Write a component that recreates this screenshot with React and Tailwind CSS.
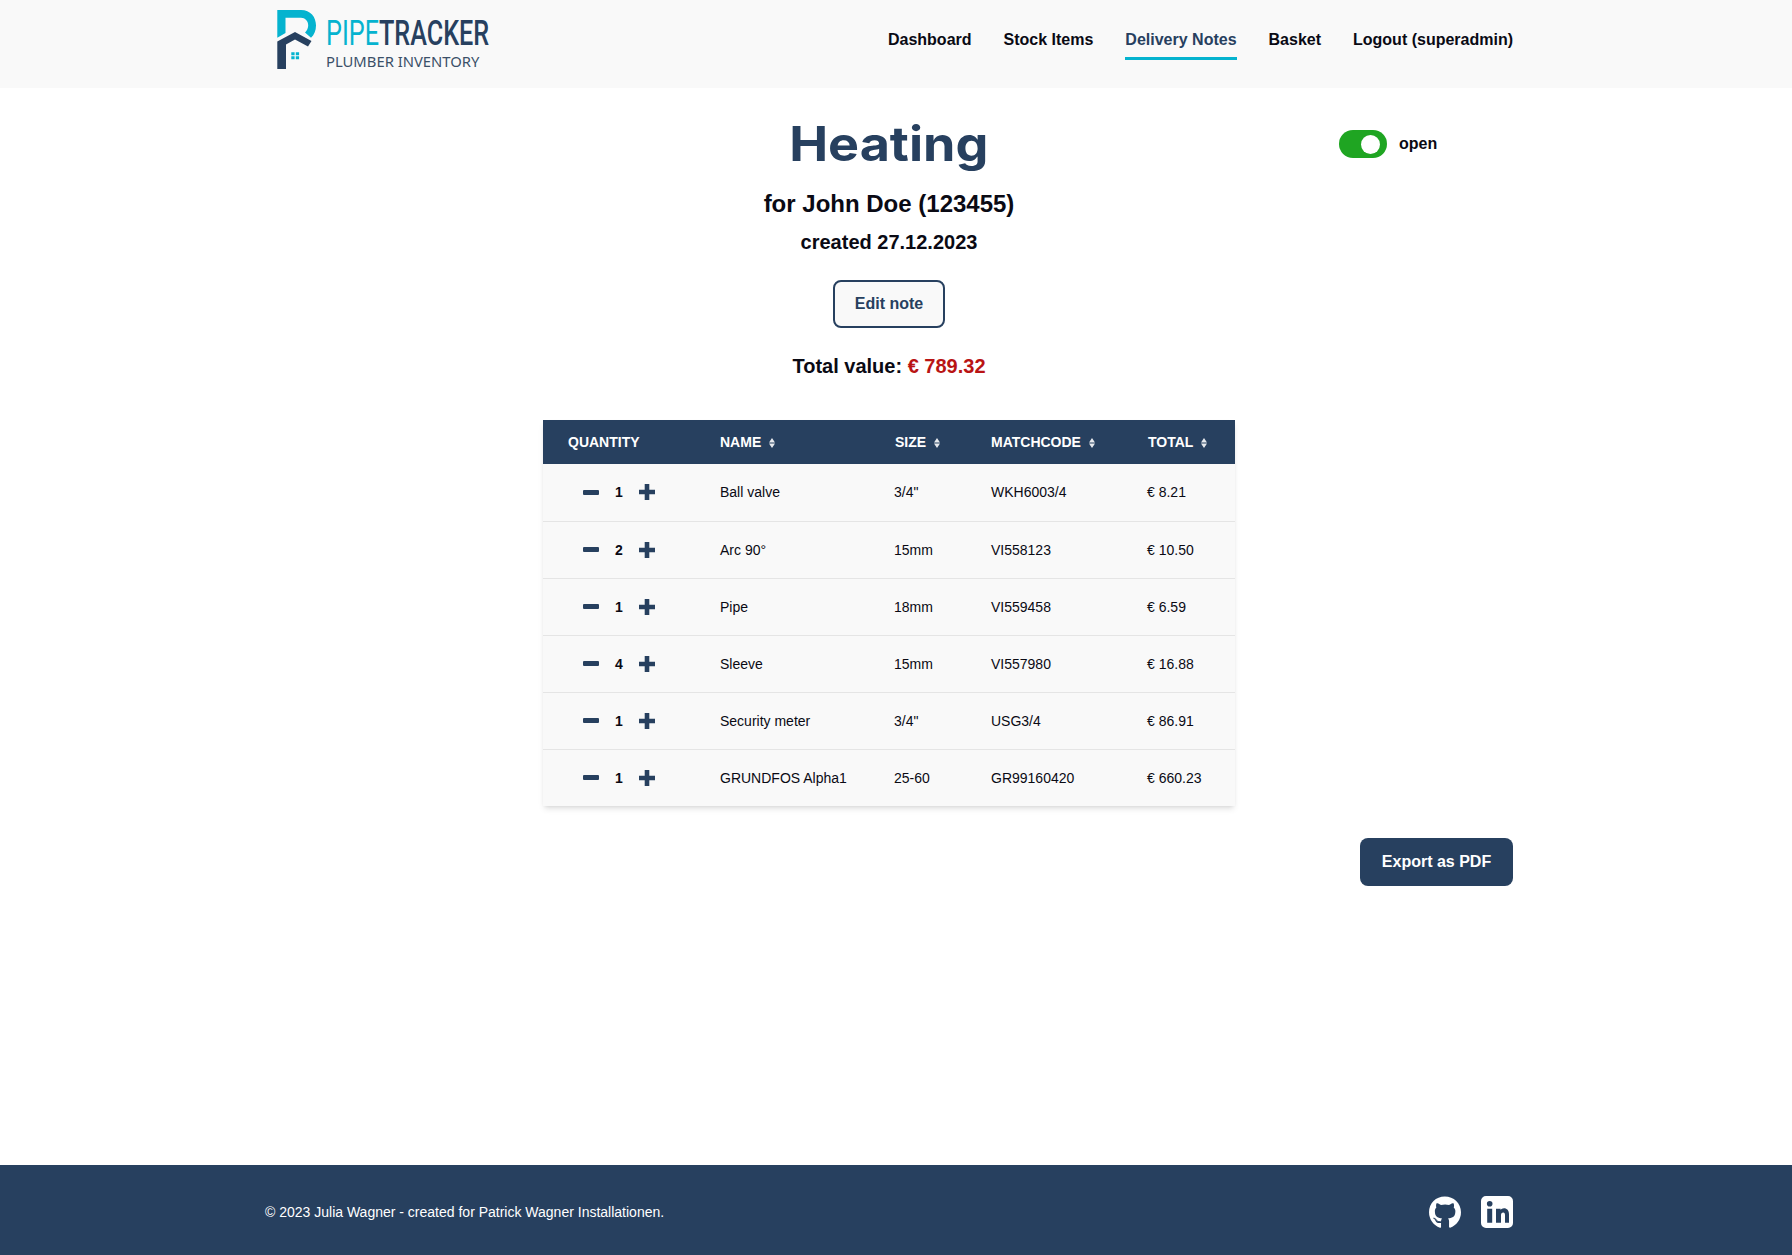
import { FaGithub } from 'react-icons/fa';

const rows = [
  { qty: 1, name: 'Ball valve', size: '3/4"', code: 'WKH6003/4', total: '€ 8.21' },
  { qty: 2, name: 'Arc 90°', size: '15mm', code: 'VI558123', total: '€ 10.50' },
  { qty: 1, name: 'Pipe', size: '18mm', code: 'VI559458', total: '€ 6.59' },
  { qty: 4, name: 'Sleeve', size: '15mm', code: 'VI557980', total: '€ 16.88' },
  { qty: 1, name: 'Security meter', size: '3/4"', code: 'USG3/4', total: '€ 86.91' },
  { qty: 1, name: 'GRUNDFOS Alpha1', size: '25-60', code: 'GR99160420', total: '€ 660.23' },
];

const navItems = [
  { label: 'Dashboard' },
  { label: 'Stock Items' },
  { label: 'Delivery Notes', active: true },
  { label: 'Basket' },
  { label: 'Logout (superadmin)' },
];

function Logo() {
  return (
    <div className="flex items-start">
      <svg width="42" height="62" viewBox="16 9 42 62" className="mt-[9px] shrink-0">
        <path d="M17.3 10H41C50.5 10 56 17 56 25.5C56 30.5 54 35 51 37.8L45 32.5C47 30.5 48.2 28 48.2 25.5C48.2 21 45 17.8 41 17.8H25.5V33L17.3 37.8Z" fill="#05b3cf" />
        <path d="M17.3 69V41.5L35 32L51.5 41L48 46.5L35 39.5L26 44.5V69Z" fill="#27405f" />
        <path d="M31.3 52.3h3.3v3h-3.3zM35.8 52.3h3.3v3h-3.3zM31.3 56.3h3.3v3h-3.3zM35.8 56.3h3.3v3h-3.3z" fill="#05b3cf" />
      </svg>
      <div className="ml-[8px] flex flex-col">
        <p className="mt-[15px] h-[38px] origin-left scale-x-[0.72] whitespace-nowrap font-['Roboto',sans-serif] text-[35px] leading-[38px]">
          <span className="text-[#05b3cf]">PIPE</span>
          <span className="font-medium text-[#27405f]">TRACKER</span>
        </p>
        <p className="whitespace-nowrap font-['Noto_Sans',sans-serif] text-[14.8px] leading-[16px] text-[#3b5068]">PLUMBER INVENTORY</p>
      </div>
    </div>
  );
}

function SortIcon() {
  return (
    <svg width="6" height="10" viewBox="0 0 6 10" className="ml-[8px] inline-block align-[-1px]">
      <path d="M3 0L6 4.4H0ZM3 10L0 5.6H6Z" fill="#e6e9ed" />
    </svg>
  );
}

function Minus() {
  return <span className="block h-[5px] w-[16px] rounded-[1px] bg-[#27405f]" />;
}

function Plus() {
  return (
    <svg width="16" height="16" viewBox="0 0 16 16" className="block">
      <path d="M5.7 0h4.6v5.7H16v4.6h-5.7V16H5.7v-5.7H0V5.7h5.7z" fill="#27405f" />
    </svg>
  );
}

function LinkedinIcon() {
  return (
    <svg width="32" height="32" viewBox="0 0 32 32" className="block">
      <path
        fillRule="evenodd"
        d="M5 0H27A5 5 0 0 1 32 5V27A5 5 0 0 1 27 32H5A5 5 0 0 1 0 27V5A5 5 0 0 1 5 0ZM6.2 12.7V26.7H11.2V12.7ZM8.7 5A2.8 2.8 0 1 0 8.7 10.6A2.8 2.8 0 1 0 8.7 5ZM15 12.7V26.7H20V19.2C20 17.4 20.8 16.4 22.2 16.4C23.5 16.4 24 17.4 24 19.2V26.7H28V18.4C28 14.5 26 12.3 23 12.3C21.5 12.3 20.3 13 19.6 14.1V12.7Z"
        fill="#fff"
      />
    </svg>
  );
}

export default function App() {
  return (
    <div className="flex min-h-[1255px] flex-col bg-white font-['Liberation_Sans',Arial,sans-serif] text-[#0a0a14]">
      {/* Header */}
      <header className="h-[88px] bg-[#f9f9f9]">
        <div className="ml-[265px] flex w-[1248px] items-start justify-between pl-[11px]">
          <Logo />
          <nav className="flex gap-[32px] pt-[29px] text-base font-bold">
            {navItems.map((item) => (
              <a
                key={item.label}
                className={`h-[31px] whitespace-nowrap leading-[22px] ${
                  item.active ? 'border-b-[3px] border-[#05b3cf] text-[#27405f]' : ''
                }`}
              >
                {item.label}
              </a>
            ))}
          </nav>
        </div>
      </header>

      {/* Main */}
      <main className="ml-[265px] w-[1248px] flex-1">
        <div className="grid grid-cols-[278px_692px_278px]">
          <div />
          <div className="flex flex-col items-center">
            <h1 className="mt-[28px] scale-x-[1.085] font-['Inter',sans-serif] text-[48px] font-bold leading-[56px] text-[#27405f]">Heating</h1>
            <h2 className="mt-[18px] text-2xl font-bold leading-[28px]">for John Doe (123455)</h2>
            <h3 className="mt-[12px] text-xl font-bold leading-[24px]">created 27.12.2023</h3>
            <button className="mt-[26px] h-[48px] w-[112px] rounded-lg border-2 border-[#27405f] bg-[#f9f9f9] text-base font-bold text-[#27405f]">
              Edit note
            </button>
            <p className="mt-[26px] text-xl font-bold leading-[24px]">
              Total value: <span className="text-[#b91414]">€ 789.32</span>
            </p>
            <table className="mt-[42px] w-[692px] table-fixed border-collapse bg-[#f9f9f9] text-sm shadow-md">
              <colgroup>
                <col className="w-[177px]" />
                <col className="w-[174px]" />
                <col className="w-[97px]" />
                <col className="w-[156px]" />
                <col className="w-[88px]" />
              </colgroup>
              <thead>
                <tr className="h-[44px] bg-[#27405f] text-left text-white">
                  <th className="pl-[25px] font-bold">QUANTITY</th>
                  <th className="font-bold">NAME<SortIcon /></th>
                  <th className="pl-[1px] font-bold">SIZE<SortIcon /></th>
                  <th className="font-bold">MATCHCODE<SortIcon /></th>
                  <th className="pl-[1px] font-bold">TOTAL<SortIcon /></th>
                </tr>
              </thead>
              <tbody>
                {rows.map((row, i) => (
                  <tr key={i} className="h-[57px] border-t border-[#e5e5e5] first:border-t-0">
                    <td>
                      <div className="flex items-center pl-[40px]">
                        <Minus />
                        <span className="w-[40px] text-center font-bold">{row.qty}</span>
                        <Plus />
                      </div>
                    </td>
                    <td>{row.name}</td>
                    <td>{row.size}</td>
                    <td>{row.code}</td>
                    <td>{row.total}</td>
                  </tr>
                ))}
              </tbody>
            </table>
          </div>
          <div className="pl-[104px] pt-[42px]">
            <div className="flex items-center">
              <span className="flex h-[28px] w-[48px] items-center justify-end rounded-full bg-[#1fa522] pr-[7px]">
                <span className="h-[19px] w-[19px] rounded-full bg-white" />
              </span>
              <span className="ml-[12px] text-base font-bold">open</span>
            </div>
          </div>
        </div>
        <div className="mt-[32px] flex justify-end">
          <button className="h-[48px] w-[153px] rounded-lg bg-[#27405f] text-base font-bold text-white">Export as PDF</button>
        </div>
      </main>

      {/* Footer */}
      <footer className="h-[90px] bg-[#27405f] pt-[4px] text-white">
        <div className="ml-[265px] flex h-full w-[1248px] items-center justify-between">
          <p className="text-sm">© 2023 Julia Wagner - created for Patrick Wagner Installationen.</p>
          <div className="flex items-center gap-[20px]">
            <FaGithub className="h-[33px] w-[32px]" />
            <LinkedinIcon />
          </div>
        </div>
      </footer>
    </div>
  );
}
